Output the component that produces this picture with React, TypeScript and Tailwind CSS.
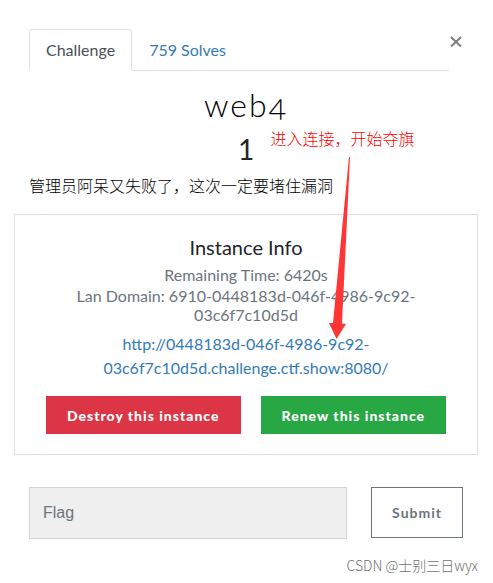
import React from "react";

const lato = "font-['Lato','Noto_Sans_CJK_SC',sans-serif]";
const cjk = "font-['Noto_Sans_CJK_SC',sans-serif]";

function Tabs() {
  return (
    <header className="flex items-start">
      <nav className="flex grow border-b border-[#dee2e6] leading-6">
        <a
          href="#challenge"
          className="-mb-px rounded-t border border-[#dee2e6] border-b-white bg-white px-4 py-2 text-[#495057]"
        >
          Challenge
        </a>
        <a href="#solves" className="-mb-px border border-transparent px-4 py-2 text-[#337ab7]">
          759 Solves
        </a>
      </nav>
      <button type="button" aria-label="Close" className="flex h-6 w-[14px] items-center justify-center text-[#7f7f7f]">
        <svg viewBox="0 0 12 12" className="h-3 w-3 shrink-0" fill="none" stroke="currentColor" strokeWidth="2">
          <path d="M1 2 L11 11.500 M11 2 L1 11.500" />
        </svg>
      </button>
    </header>
  );
}

function InstanceCard() {
  return (
    <section className="-mx-[15px] mt-4 border border-[#dfdfdf] p-5 text-center">
      <h5 className="mb-[6px] text-[20px] leading-6">Instance Info</h5>
      <div className="px-3 text-[#6c757d]">
        <h6 className="mb-[2px] leading-[19px]">Remaining Time: 6420s</h6>
        <h6 className="mb-2 leading-[19px]">Lan Domain: 6910-0448183d-046f-4986-9c92-03c6f7c10d5d</h6>
      </div>
      <p className="mb-4 px-3 leading-6">
        <a href="#instance" className="text-[#337ab7]">
          http://0448183d-046f-4986-9c92-03c6f7c10d5d.challenge.ctf.show:8080/
        </a>
      </p>
      <div className="flex justify-center gap-5 text-[14px] font-black tracking-[1px] text-white">
        <button type="button" className="h-[38px] border border-[#dc3545] bg-[#dc3545] px-5 whitespace-nowrap">
          Destroy this instance
        </button>
        <button type="button" className="h-[38px] border border-[#28a745] bg-[#28a745] px-5 whitespace-nowrap">
          Renew this instance
        </button>
      </div>
    </section>
  );
}

export default function App() {
  return (
    <main className={`relative bg-white pt-[29px] pr-[30px] pb-2 pl-[29px] text-[16px] text-[#212529] ${lato}`}>
      <Tabs />
      <div className="text-center">
        <h2 className="mt-[15px] text-[32px] leading-[38px] font-light tracking-[2px] text-black oldstyle-nums">web4</h2>
        <h3 className="mt-2 text-[28px] leading-[34px]">1</h3>
      </div>
      <p className={`mt-[7px] mb-[17px] leading-6 font-light text-black ${cjk}`}>管理员阿呆又失败了，这次一定要堵住漏洞</p>
      <InstanceCard />
      <form className="mt-8 flex items-start gap-6" onSubmit={(e) => e.preventDefault()}>
        <input
          type="text"
          aria-label="Flag"
          placeholder="Flag"
          className="h-[52px] min-w-0 grow border border-[#ced4da] bg-[#efefef] px-[13px] font-['Liberation_Sans',sans-serif] placeholder:text-[#6c757d]"
        />
        <button
          type="submit"
          className="h-[51px] border border-[#6c757d] px-5 text-[14px] font-bold tracking-[1px] text-[#6c757d]"
        >
          Submit
        </button>
      </form>
      <footer className={`-mr-[15px] mt-4 text-right text-[14px] leading-5 font-light text-[#707070] ${cjk}`}>
        CSDN @士别三日wyx
      </footer>

      <div className="pointer-events-none absolute top-[126px] left-1/2 ml-6">
        <p className={`leading-6 font-light whitespace-nowrap text-[#ff0000] ${cjk}`}>进入连接，开始夺旗</p>
        <svg viewBox="0 0 144 190" className="h-[190px] w-36 text-[#ff3636]" fill="currentColor">
          <path d="M78 7 L62 173 L58 173 L65.500 189 L75 174 L71 173.500 L79 7 Z" />
        </svg>
      </div>
    </main>
  );
}
